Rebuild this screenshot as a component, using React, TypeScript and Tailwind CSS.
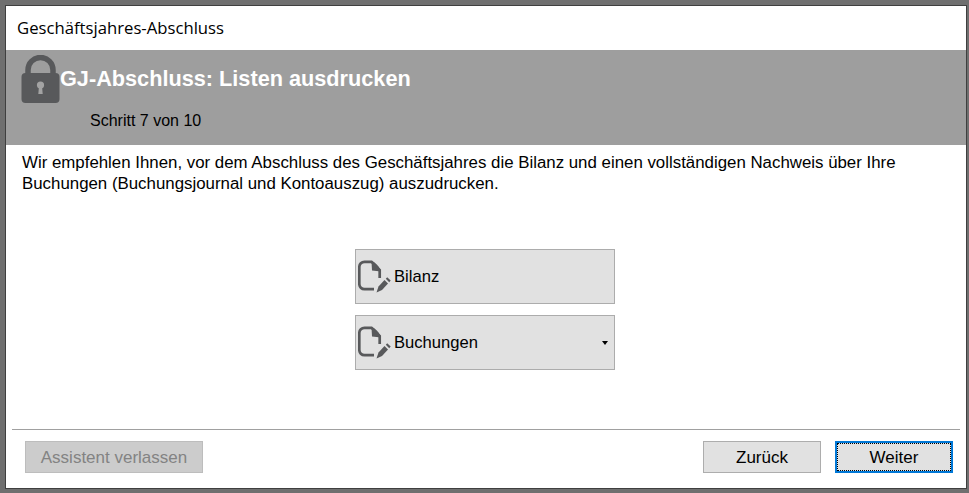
const sans = "font-['Liberation_Sans',Arial,sans-serif]";

function DocPenIcon() {
  return (
    <svg width="36" height="36" viewBox="0 0 36 36" className="shrink-0" aria-hidden="true">
      <path
        d="M16 30.200H6.500a5.200 5.200 0 0 1-5.200-5.200V8a5.200 5.200 0 0 1 5.200-5.200h7L21.700 11V19"
        fill="none"
        stroke="#58595b"
        strokeWidth="2.7"
      />
      <path d="M13.500 2C17 3 21.500 7.500 23 12.500L14 11.500Z" fill="#58595b" />
      <path d="M20.500 27.500 26.500 21 30 24.500 24 31 18.500 33.500Z" fill="#58595b" />
      <path d="M27.800 19.700 29.200 18.200 32.700 21.500 31.200 23.200Z" fill="#58595b" />
    </svg>
  );
}

function LockIcon() {
  return (
    <svg width="39" height="49" viewBox="0 0 39 49" className="shrink-0" aria-hidden="true">
      <path d="M7 21V15a12.500 12.500 0 0 1 25 0v6" fill="none" stroke="#58595b" strokeWidth="5.5" />
      <rect x="0.5" y="18" width="38" height="30" rx="4" fill="#58595b" />
      <circle cx="19.500" cy="30" r="3.6" fill="#a3a3a3" />
      <path d="M18 31h3l.7 8h-4.400Z" fill="#a3a3a3" />
    </svg>
  );
}

function ReportButton({ label, menu }: { label: string; menu?: boolean }) {
  return (
    <button
      type="button"
      className="flex h-[55px] w-[260px] items-center border border-[#acacac] bg-[#e1e1e1] pl-[2px] pr-[6px] text-[16.6px] text-black"
    >
      <DocPenIcon />
      <span className="pt-[2px]">{label}</span>
      {menu && <span className="ml-auto h-0 w-0 border-x-[3.5px] border-t-[4px] border-x-transparent border-t-black" />}
    </button>
  );
}

export default function App() {
  return (
    <div className={`h-[493px] w-[969px] overflow-hidden bg-[#6f6f6f] pb-[4px] pl-[5px] pr-[2px] pt-[5px] ${sans}`}>
      <div className="flex h-full flex-col border border-[#3f3f3f] bg-white">
        <div className="flex h-[44px] shrink-0 items-center pl-[11px] font-['Open_Sans',sans-serif] text-[16.7px] text-black">
          Geschäftsjahres-Abschluss
        </div>
        <header className="h-[95px] shrink-0 bg-[#9e9e9e] pl-[15px] pt-[5px]">
          <div className="flex items-start">
            <LockIcon />
            <h1 className="mt-[12px] text-[21.7px] font-bold leading-[24px] text-white">GJ-Abschluss: Listen ausdrucken</h1>
          </div>
          <p className="ml-[69px] mt-[7px] text-[16px] leading-[20px] text-black">Schritt 7 von 10</p>
        </header>
        <p className="ml-[16px] mt-[7px] text-[16.85px] leading-[21px] text-black">
          Wir empfehlen Ihnen, vor dem Abschluss des Geschäftsjahres die Bilanz und einen vollständigen Nachweis über Ihre
          <br />
          Buchungen (Buchungsjournal und Kontoauszug) auszudrucken.
        </p>
        <div className="mt-[55px] flex flex-col items-center gap-[11px] pr-[2px]">
          <ReportButton label="Bilanz" />
          <ReportButton label="Buchungen" menu />
        </div>
        <footer className="mx-[6px] mt-auto mb-[15px] border-t border-[#a0a0a0] pl-[13px] pr-[7px] pt-[11px]">
          <div className="flex items-center">
            <button
              type="button"
              disabled
              className="h-[32px] w-[178px] border border-[#bdbdbd] bg-[#cccccc] pt-[2px] text-[17px] text-[#838383]"
            >
              Assistent verlassen
            </button>
            <button
              type="button"
              className="ml-auto h-[32px] w-[118px] border border-[#adadad] bg-[#e1e1e1] pt-[2px] text-[17px] text-black"
            >
              Zurück
            </button>
            <button
              type="button"
              className="ml-[14px] h-[32px] w-[118px] border-2 border-[#0078d7] bg-[#e1e1e1] pt-[2px] text-[17px] text-black outline-1 -outline-offset-3 outline-dotted outline-black"
            >
              Weiter
            </button>
          </div>
        </footer>
      </div>
    </div>
  );
}
